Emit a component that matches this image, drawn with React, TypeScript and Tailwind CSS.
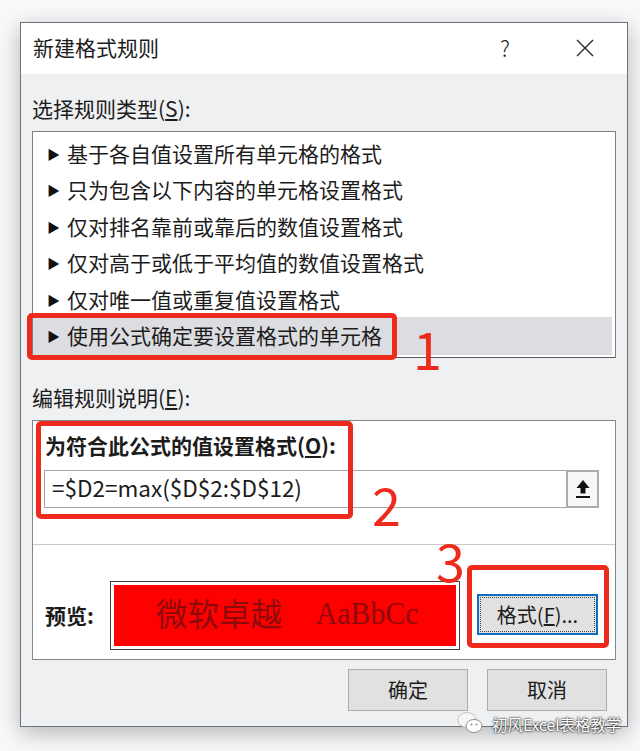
const rows = [
  "基于各自值设置所有单元格的格式",
  "只为包含以下内容的单元格设置格式",
  "仅对排名靠前或靠后的数值设置格式",
  "仅对高于或低于平均值的数值设置格式",
  "仅对唯一值或重复值设置格式",
  "使用公式确定要设置格式的单元格",
];

function Wechat() {
  return (
    <svg width="30" height="26" viewBox="0 0 30 26" className="absolute left-[0px] top-[0px]">
      <ellipse cx="10" cy="9" rx="9" ry="7.5" fill="#f6f6f6" stroke="#b5b5b5" strokeWidth="0.8" />
      <ellipse cx="17" cy="15" rx="8" ry="6.5" fill="#ffffff" stroke="#8f8f8f" strokeWidth="1" />
      <circle cx="14.5" cy="13.5" r="1" fill="#8f8f8f" />
      <circle cx="19.5" cy="13.5" r="1" fill="#8f8f8f" />
    </svg>
  );
}

export default function App() {
  const font = { fontFamily: '"Noto Sans CJK SC", sans-serif' };
  return (
    <div className="relative h-[751px] w-[640px] overflow-hidden bg-[#f8f9fa] pl-[20px] pt-[22px] text-[#1c1c1c]" style={font}>
      <div className="h-[705px] w-[608px] border border-[#6f7378] bg-[#eff0f1] shadow-[0_6px_22px_rgba(0,0,0,0.28)]">
        <div className="flex h-[51px] items-center bg-white pb-[2px] pl-[12px] pr-[33px]">
          <span className="text-[21px]">新建格式规则</span>
          <span className="ml-auto mr-[66px] text-[22px] font-light">?</span>
          <svg width="18" height="18" viewBox="0 0 18 18" className="text-[#222]">
            <path d="M1 1 L17 17 M17 1 L1 17" stroke="currentColor" strokeWidth="1.3" fill="none" />
          </svg>
        </div>
        <div className="px-[11px]">
          <div className="flex h-[57px] items-center pt-[13px] text-[21px]">
            <span>选择规则类型(<u>S</u>):</span>
          </div>
          <div className="h-[227px] overflow-hidden border border-[#7d7f82] border-b-[#55585c] bg-white pt-[4px]">
            {rows.map((r, i) => (
              <div
                key={r}
                className={`flex items-center pl-[14px] text-[21px] ${i === 5 ? "relative mr-[3px] -mt-[2px] h-[38.5px] bg-[#dcdde0]" : "h-[36.5px] pb-[2px]"}`}
              >
                <span className="mr-[7px] text-[13px] text-[#111]">▶</span>
                <span>{r}</span>
              </div>
            ))}
          </div>
          <div className="flex h-[62px] items-center pt-[18px] text-[21px]">
            <span>编辑规则说明(<u>E</u>):</span>
          </div>
          <div className="h-[240px] border border-[#84878a] bg-white">
            <div className="flex h-[49px] items-start pl-[12px] pt-[9px] text-[21px] font-bold">
              <span className="leading-[30px]">为符合此公式的值设置格式(<u>O</u>):</span>
            </div>
            <div className="ml-[11px] flex h-[38px] w-[555px] items-center border border-[#a4a6a8] bg-white pl-[7px] text-[22.5px]">
              <span className="pb-[3px]">=$D2=max($D$2:$D$12)</span>
              <div className="-mr-[1px] ml-auto flex h-[38px] w-[33px] items-center justify-center border-[2px] border-[#ababab] bg-[#f7f7f7]">
                <svg width="16" height="20" viewBox="0 0 16 20">
                  <path d="M8 1 L14.5 9 H10.5 V14.5 H5.5 V9 H1.5 Z" fill="#111" />
                  <rect x="1" y="17" width="14" height="2" fill="#111" />
                </svg>
              </div>
            </div>
            <div className="mt-[36px] border-t border-[#c9cacc]" />
            <div className="flex pt-[36px]">
              <div className="flex w-[77px] items-center pl-[12px] text-[21px] font-bold">预览:</div>
              <div className="h-[69px] w-[350px] border border-[#3c3f43] bg-white p-[3px]">
                <div className="flex h-full items-center justify-start bg-[#ff0000] pb-[5px] pl-[42px] text-[#8c0a0a]">
                  <span className="text-[31.5px]">微软卓越</span>
                  <span className="ml-[30px] inline-block scale-x-[0.93] text-[32px]" style={{ fontFamily: '"Liberation Serif", serif' }}>AaBbCc</span>
                </div>
              </div>
              <div className="ml-[17px] mt-[13px] flex h-[41px] w-[121px] items-center justify-center border-2 border-[#0f6cc0] bg-[#e1e1e1] text-[20px] outline-1 -outline-offset-4 outline-dotted outline-[#444]">
                <span>格式(<u>F</u>)...</span>
              </div>
            </div>
          </div>
          <div className="flex justify-end gap-[19px] pr-[9px] pt-[9px]">
            <div className="flex h-[42px] w-[120px] items-center justify-center border border-[#adadad] bg-[#e1e1e1] text-[20px]">确定</div>
            <div className="flex h-[42px] w-[120px] items-center justify-center border border-[#adadad] bg-[#e1e1e1] text-[20px]">取消</div>
          </div>
        </div>
      </div>

      {/* red annotations */}
      <div className="absolute left-[27px] top-[313px] h-[47px] w-[370px] rounded-[5px] border-[5px] border-[#ee2a1d]" />
      <div className="absolute left-[36px] top-[421px] h-[98px] w-[317px] rounded-[5px] border-[5px] border-[#ee2a1d]" />
      <div className="absolute left-[467px] top-[565px] h-[83px] w-[142px] rounded-[5px] border-[5px] border-[#ee2a1d]" />
      <span className="absolute left-[413px] top-[318px] text-[52px] leading-[60px] text-[#ee2a1d]">1</span>
      <span className="absolute left-[372px] top-[474px] text-[52px] leading-[60px] text-[#ee2a1d]">2</span>
      <span className="absolute left-[436px] top-[530px] text-[52px] leading-[60px] text-[#ee2a1d]">3</span>

      {/* watermark */}
      <div className="absolute left-[457px] top-[711px] h-[26px] w-[170px]">
        <Wechat />
        <span className="absolute left-[35px] top-[1px] text-[15.5px] leading-[24px] whitespace-nowrap text-white [text-shadow:0_0_2px_#222,0_0_2px_#222]">初风Excel表格教学</span>
      </div>
    </div>
  );
}
